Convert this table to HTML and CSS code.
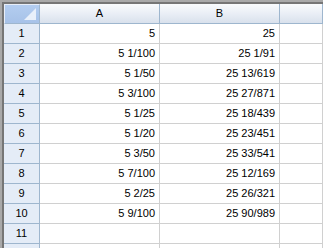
FILE: index.html
```html
<!DOCTYPE html>
<html>
  <head>
    <meta charset="UTF-8" />
    <title>Sheet</title>
    <link rel="stylesheet" href="styles.css">
  </head>
  <body>
    <div class="frame">
      <div class="sheet">
        <div class="corner"><span class="corner-mark"></span></div>
        <div class="col-head">A</div>
        <div class="col-head">B</div>
        <div class="col-head"></div>

        <div class="row-head">1</div><div class="cell">5</div><div class="cell">25</div><div class="cell"></div>
        <div class="row-head">2</div><div class="cell">5 1/100</div><div class="cell">25 1/91</div><div class="cell"></div>
        <div class="row-head">3</div><div class="cell">5 1/50</div><div class="cell">25 13/619</div><div class="cell"></div>
        <div class="row-head">4</div><div class="cell">5 3/100</div><div class="cell">25 27/871</div><div class="cell"></div>
        <div class="row-head">5</div><div class="cell">5 1/25</div><div class="cell">25 18/439</div><div class="cell"></div>
        <div class="row-head">6</div><div class="cell">5 1/20</div><div class="cell">25 23/451</div><div class="cell"></div>
        <div class="row-head">7</div><div class="cell">5 3/50</div><div class="cell">25 33/541</div><div class="cell"></div>
        <div class="row-head">8</div><div class="cell">5 7/100</div><div class="cell">25 12/169</div><div class="cell"></div>
        <div class="row-head">9</div><div class="cell">5 2/25</div><div class="cell">25 26/321</div><div class="cell"></div>
        <div class="row-head">10</div><div class="cell">5 9/100</div><div class="cell">25 90/989</div><div class="cell"></div>
        <div class="row-head">11</div><div class="cell"></div><div class="cell"></div><div class="cell"></div>
        <div class="row-head"></div><div class="cell"></div><div class="cell"></div><div class="cell"></div>
      </div>
    </div>
  </body>
</html>
```

FILE: styles.css
```css
html,
body {
  margin: 0;
  padding: 0;
  height: 100%;
  overflow: hidden;
  background: #ffffff;
}

.frame {
  height: 100%;
  border-top: 2px solid #a9a9a9;
  border-left: 2px solid #a9a9a9;
  box-sizing: border-box;
  overflow: hidden;
}

.sheet {
  height: 100%;
  box-sizing: border-box;
  overflow: hidden;
  border-top: 2px solid #767676;
  border-left: 2px solid #767676;
  display: grid;
  grid-template-columns: 36px 120px 120px 1fr;
  grid-auto-rows: 20px;
  font-family: "Liberation Sans", Arial, sans-serif;
  font-size: 11px;
  color: #000000;
}

.sheet > div {
  box-sizing: border-box;
  border-right: 1px solid #d0d0d0;
  border-bottom: 1px solid #d0d0d0;
  display: flex;
  align-items: center;
  padding-bottom: 1px;
}

.sheet > .corner {
  position: relative;
  background: linear-gradient(180deg, #b3cdf0 0%, #a7c2e8 100%);
  border-right: 1px solid #9eb6ce;
  border-bottom: 1px solid #9eb6ce;
  border-top: 1px solid #e8eef8;
  border-left: 1px solid #e8eef8;
}

.corner-mark {
  position: absolute;
  right: 3px;
  bottom: 3px;
  width: 0;
  height: 0;
  border-left: 12px solid transparent;
  border-bottom: 12px solid #e9f0fa;
}

.sheet > .col-head {
  justify-content: center;
  background: linear-gradient(180deg, #f9fbfd 0%, #e8edf5 55%, #d9e1ec 100%);
  border-right: 1px solid #9eb6ce;
  border-bottom: 1px solid #9eb6ce;
}

.sheet > .row-head {
  justify-content: center;
  background: #e4ecf7;
  border-right: 1px solid #9eb6ce;
  border-bottom: 1px solid #9eb6ce;
}

.sheet > .cell {
  justify-content: flex-end;
  padding-right: 4px;
}
```
